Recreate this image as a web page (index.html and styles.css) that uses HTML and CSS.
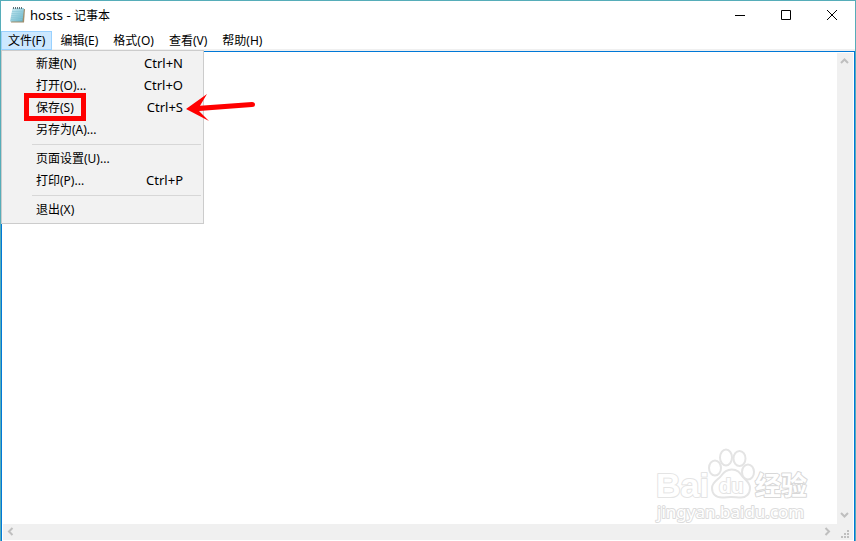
FILE: index.html
```html
<!DOCTYPE html>
<html lang="zh-CN">
<head>
    <meta charset="UTF-8">
    <meta name="viewport" content="width=device-width, initial-scale=1.0">
    <title>hosts - 记事本</title>
    <link rel="stylesheet" href="styles.css">
</head>
<body>
<div class="window">
    <header class="titlebar">
        <svg class="app-icon" width="16" height="16" viewBox="0 0 16 16">
            <defs>
                <linearGradient id="paper" x1="0" y1="0" x2="1" y2="1">
                    <stop offset="0" stop-color="#d3eff5"/>
                    <stop offset="1" stop-color="#5fb0c6"/>
                </linearGradient>
            </defs>
            <path d="M4 2 L16 2 L15 15.5 L2 15.5 Z" fill="#a08e6c"/>
            <path d="M3.5 1 L15 1 L13.5 14.5 L1 14.5 Z" fill="url(#paper)"/>
            <path d="M3 4.5 H14 M2.6 6.5 H13.8 M2.4 8.5 H13.6 M2 10.5 H13.4 M2 12.5 H13" stroke="#8ac6d6" stroke-width="0.6"/>
            <path d="M4.5 0 V2 M6.5 0 V2 M8.5 0 V2 M10.5 0 V2 M12.5 0 V2" stroke="#5b6f75" stroke-width="1"/>
        </svg>
        <h1 class="title"><span class="file-name">hosts - </span>记事本</h1>
        <div class="window-buttons">
            <button class="window-button" type="button" aria-label="最小化">
                <svg width="10" height="10" viewBox="0 0 10 10"><path d="M0 5.5 H10"/></svg>
            </button>
            <button class="window-button" type="button" aria-label="最大化">
                <svg width="10" height="10" viewBox="0 0 10 10"><path d="M0.5 0.5 H9.5 V9.5 H0.5 Z"/></svg>
            </button>
            <button class="window-button" type="button" aria-label="关闭">
                <svg width="10" height="10" viewBox="0 0 10 10"><path d="M0 0 L10 10 M10 0 L0 10"/></svg>
            </button>
        </div>
    </header>

    <nav class="menubar">
        <div class="menu">
            <button class="menu-button open" type="button">文件(F)</button>
            <div class="dropdown">
                <button class="item" type="button">新建(N)<span class="shortcut">Ctrl+N</span></button>
                <button class="item" type="button">打开(O)...<span class="shortcut">Ctrl+O</span></button>
                <button class="item marked" type="button">保存(S)<span class="shortcut">Ctrl+S</span></button>
                <button class="item" type="button">另存为(A)...</button>
                <hr class="separator">
                <button class="item" type="button">页面设置(U)...</button>
                <button class="item" type="button">打印(P)...<span class="shortcut">Ctrl+P</span></button>
                <hr class="separator">
                <button class="item" type="button">退出(X)</button>
                <svg class="arrow" width="72" height="30" viewBox="0 0 72 30">
                    <path d="M1 16 L22 1 L15 12.7 L67 9 Q70 9 70 11.5 Q70 14 67 14 L14 18 L24 28 Z" fill="#f00"/>
                </svg>
            </div>
        </div>
        <button class="menu-button" type="button">编辑(E)</button>
        <button class="menu-button" type="button">格式(O)</button>
        <button class="menu-button" type="button">查看(V)</button>
        <button class="menu-button" type="button">帮助(H)</button>
    </nav>

    <main class="editor">
        <div class="editor-row">
            <textarea class="text" aria-label="文本编辑器" spellcheck="false"></textarea>
            <div class="scrollbar vertical">
                <button class="scroll-button" type="button" aria-label="向上滚动">
                    <svg width="10" height="8" viewBox="0 0 10 8"><path d="M1 6 L4.5 2.5 L8 6"/></svg>
                </button>
                <button class="scroll-button" type="button" aria-label="向下滚动">
                    <svg width="10" height="8" viewBox="0 0 10 8"><path d="M1 1 L4.5 4.5 L8 1"/></svg>
                </button>
            </div>
        </div>
        <div class="scrollbar horizontal">
            <button class="scroll-button" type="button" aria-label="向左滚动">
                <svg width="8" height="10" viewBox="0 0 8 10"><path d="M5.5 1 L2 4.5 L5.5 8"/></svg>
            </button>
            <button class="scroll-button" type="button" aria-label="向右滚动">
                <svg width="8" height="10" viewBox="0 0 8 10"><path d="M1.5 1 L5 4.5 L1.5 8"/></svg>
            </button>
            <svg class="grip" width="17" height="16" viewBox="0 0 17 16">
                <path d="M11 6h2v2h-2z M8 9h2v2h-2z M11 9h2v2h-2z M5 12h2v2h-2z M8 12h2v2h-2z M11 12h2v2h-2z" fill="#bfbfbf"/>
            </svg>
        </div>

        <svg class="watermark" width="160" height="80" viewBox="0 0 160 80">
            <text class="mark-bold" x="5" y="50" font-size="34">Bai</text>
            <ellipse cx="64" cy="21" rx="6" ry="7.5"/>
            <ellipse cx="75" cy="10.5" rx="6" ry="8"/>
            <ellipse cx="88.5" cy="11.5" rx="6" ry="7.5"/>
            <ellipse cx="97" cy="25" rx="6" ry="7.5"/>
            <path d="M80.7 22.5 C87 22.5 89 26 91 29 C94 33 99 35 99 41 C99 47 95 50.5 90 50.5 C86 50.5 84 50 80 50 C77 50 75 50.5 71 50.5 C65 50.5 61 47 61 41 C61 35 67 33 70 29 C72 26 75 22.5 80.7 22.5 Z"/>
            <text class="mark-bold" x="68" y="46" font-size="20">du</text>
            <text class="mark-cjk" x="104" y="48" font-size="26">经验</text>
            <text class="mark-url" x="6" y="71" font-size="17">jingyan.baidu.com</text>
        </svg>
    </main>
</div>
</body>
</html>
```
FILE: styles.css
```css
*,
*::before {
    box-sizing: border-box;
}

body {
    margin: 0;
    font-family: "Noto Sans", "Noto Sans CJK SC", sans-serif;
    font-size: 12px;
    color: #000;
}

button {
    border: none;
    padding: 0;
    background: transparent;
    font: inherit;
    color: inherit;
}

svg {
    display: block;
}

.window {
    display: flex;
    flex-direction: column;
    height: 100vh;
    border: 1px solid #56adb9;
    border-bottom: none;
    background-color: #fff;
}

.titlebar {
    display: flex;
    align-items: center;
    height: 30px;
    padding: 0 0 2px 8px;
}

.title {
    flex: 1;
    margin: 0 0 0 5px;
    font-size: 12px;
    font-weight: normal;
}

.file-name {
    font-size: 13px;
}

.window-buttons {
    display: flex;
}

.window-button {
    display: flex;
    align-items: center;
    justify-content: center;
    width: 46px;
    height: 28px;
}

.window-button path {
    fill: none;
    stroke: #000;
}

.menubar {
    display: flex;
    gap: 1px;
    height: 20px;
    border-bottom: 2px solid #f0f0f0;
}

.menu {
    position: relative;
}

.menu-button {
    height: 19px;
    padding: 0 6px;
    border: 1px solid transparent;
    line-height: 17px;
    white-space: nowrap;
}

.menu-button.open {
    border-color: #99d1ff;
    background-color: #cce8ff;
}

.dropdown {
    position: absolute;
    top: 19px;
    left: 0;
    z-index: 2;
    width: 203px;
    padding: 2px;
    border: 1px solid #ccc;
    background-color: #f2f2f2;
}

.item {
    position: relative;
    display: flex;
    align-items: center;
    justify-content: space-between;
    width: 100%;
    height: 22px;
    padding: 0 18px 2px 32px;
}

.shortcut {
    font-size: 13px;
}

/* red frame round the save command */
.item.marked::before {
    content: "";
    position: absolute;
    top: -4px;
    left: 20px;
    width: 62px;
    height: 28px;
    border: 5px solid #f00;
}

.separator {
    height: 1px;
    margin: 3px 0 3px 28px;
    border: none;
    background-color: #d7d7d7;
}

.arrow {
    position: absolute;
    top: 42px;
    left: 183px;
}

.editor {
    position: relative;
    display: flex;
    flex: 1;
    flex-direction: column;
    min-height: 0;
    padding: 1px;
    border: 1px solid #0078d7;
    border-bottom: none;
}

.editor-row {
    display: flex;
    flex: 1;
    min-height: 0;
}

.text {
    flex: 1;
    border: none;
    outline: none;
    resize: none;
    overflow: hidden;
    font: inherit;
}

.scrollbar {
    display: flex;
    justify-content: space-between;
    background-color: #f0f0f0;
}

.vertical {
    flex-direction: column;
    width: 16px;
}

.horizontal {
    height: 16px;
}

.horizontal .scroll-button:nth-child(2) {
    margin-left: auto;
}

.scroll-button {
    display: flex;
    align-items: center;
    justify-content: center;
    width: 16px;
    height: 16px;
}

.scroll-button path {
    fill: none;
    stroke: #bfbfbf;
    stroke-width: 2;
}

.watermark {
    position: absolute;
    right: 43px;
    bottom: 14px;
    overflow: visible;
    fill: #fff;
    stroke: #e4e4e4;
    stroke-width: 2px;
    stroke-linejoin: round;
}

.mark-bold {
    font-family: "Liberation Sans", sans-serif;
    font-weight: bold;
    paint-order: stroke;
}

.mark-cjk {
    font-family: "Noto Sans CJK SC", sans-serif;
    font-weight: bold;
    stroke: #d8d8d8;
    paint-order: stroke;
}

.mark-url {
    font-family: "Noto Sans", sans-serif;
    stroke: #dcdcdc;
    paint-order: stroke;
}
```
